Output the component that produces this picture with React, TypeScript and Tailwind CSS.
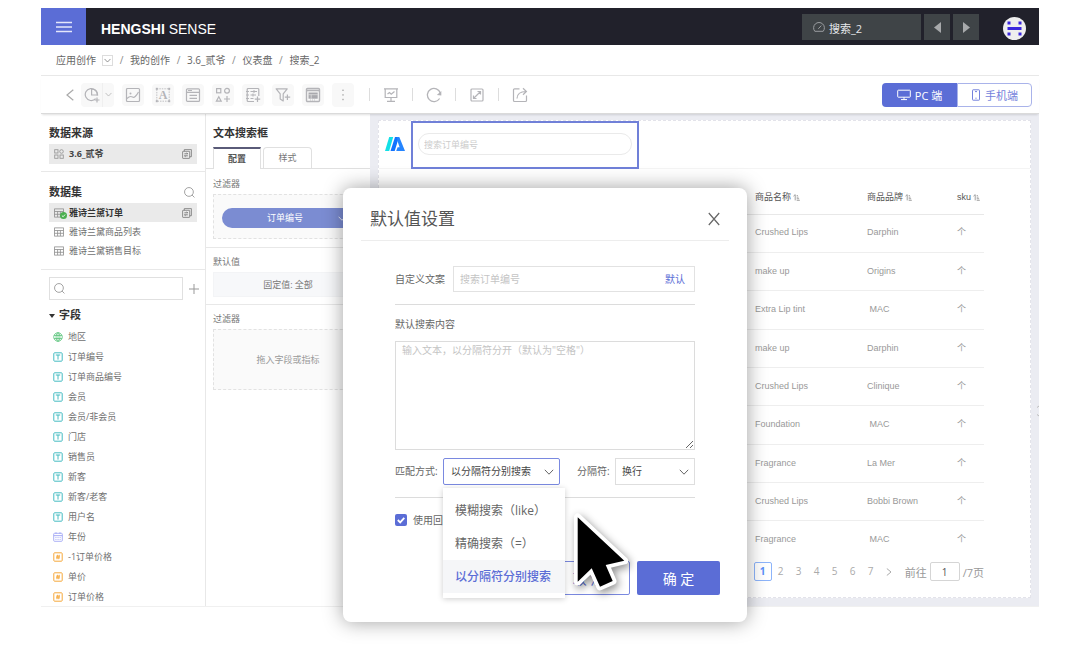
import { useState } from "react";
import type { ReactNode } from "react";

type FieldType = "geo" | "text" | "date" | "number";

const crumbs = ["我的创作", "3.6_贰爷", "仪表盘", "搜索_2"];

const datasets = ["雅诗兰黛订单", "雅诗兰黛商品列表", "雅诗兰黛销售目标"];

const fields: { name: string; type: FieldType }[] = [
  { name: "地区", type: "geo" },
  { name: "订单编号", type: "text" },
  { name: "订单商品编号", type: "text" },
  { name: "会员", type: "text" },
  { name: "会员/非会员", type: "text" },
  { name: "门店", type: "text" },
  { name: "销售员", type: "text" },
  { name: "新客", type: "text" },
  { name: "新客/老客", type: "text" },
  { name: "用户名", type: "text" },
  { name: "年份", type: "date" },
  { name: "-1订单价格", type: "number" },
  { name: "单价", type: "number" },
  { name: "订单价格", type: "number" },
];

const rows = [
  ["Crushed Lips", "Darphin"],
  ["make up", "Origins"],
  ["Extra Lip tint", " MAC"],
  ["make up", "Darphin"],
  ["Crushed Lips", "Clinique"],
  ["Foundation", " MAC"],
  ["Fragrance", "La Mer"],
  ["Crushed Lips", "Bobbi Brown"],
  ["Fragrance", " MAC"],
];

const matchModes = ["模糊搜索（like）", "精确搜索（=）", "以分隔符分别搜索"];

function Chevron({ className }: { className?: string }) {
  return (
    <svg viewBox="0 0 10 6" fill="none" stroke="currentColor" className={className}>
      <path d="M0.8 0.8 5 5.2 9.2 0.8" />
    </svg>
  );
}

function SearchIcon({ className }: { className?: string }) {
  return (
    <svg viewBox="0 0 12 12" fill="none" stroke="currentColor" className={className}>
      <circle cx="5.4" cy="5.4" r="4.8" />
      <path d="M8.8 8.8 11.4 11.4" />
    </svg>
  );
}

function Glyph({ children }: { children: ReactNode }) {
  return (
    <svg viewBox="0 0 16 16" fill="none" stroke="#b4b4b8" strokeWidth="1.2" className="h-4 w-4">
      {children}
    </svg>
  );
}

const widgetTools: { label: string; icon: ReactNode }[] = [
  {
    label: "图片",
    icon: (
      <>
        <rect x="1.5" y="1.5" width="13" height="13" rx="1" />
        <circle cx="5.5" cy="6.5" r="1" fill="#b4b4b8" stroke="none" />
        <path d="M2 11.5 Q5 8.5 7.5 10 T13.5 5" />
      </>
    ),
  },
  {
    label: "文本",
    icon: (
      <>
        <rect x="1.8" y="1.8" width="12.4" height="12.4" strokeDasharray="1.5 1" strokeWidth="0.8" />
        <g fill="#b4b4b8" stroke="none">
          <rect x="0.8" y="0.8" width="2" height="2" />
          <rect x="13.2" y="0.8" width="2" height="2" />
          <rect x="0.8" y="13.2" width="2" height="2" />
          <rect x="13.2" y="13.2" width="2" height="2" />
          <text x="8" y="12" fontSize="12" fontWeight="700" textAnchor="middle" fontFamily="Liberation Serif, serif">A</text>
        </g>
      </>
    ),
  },
  {
    label: "容器",
    icon: (
      <>
        <rect x="1.5" y="1.8" width="13" height="12.6" rx="1" />
        <path d="M1.5 5.3H14.5M4.5 8.3H12M4.5 11.3H12" />
        <path d="M3 3.5H7" strokeWidth="1" />
      </>
    ),
  },
  {
    label: "组件",
    icon: (
      <>
        <rect x="1.6" y="1.6" width="4.2" height="4.2" />
        <circle cx="12" cy="3.8" r="2.4" />
        <path d="M3.8 9.8 6.2 14.2H1.4ZM12 9V15M9 12H15" />
      </>
    ),
  },
  {
    label: "表单",
    icon: (
      <>
        <path d="M13.8 9V2.5a1 1 0 0 0-1-1H3.2a1 1 0 0 0-1 1v11a1 1 0 0 0 1 1H9" />
        <path d="M1 4.5H4M1 8H4M1 11.5H4M5.5 4.5H12M5.5 8H11M5.5 11.5H8.5M9 3V6M8 6.5V9.5" strokeWidth="1" />
        <path d="M12.5 9.5V15M9.8 12.2H15.2" />
      </>
    ),
  },
  {
    label: "过滤器",
    icon: (
      <>
        <path d="M1.2 1.8H12.2L8.2 6.8V14L5.2 12V6.8Z" strokeLinejoin="round" />
        <path d="M12.4 7.5V13M9.8 10.2H15.2" />
      </>
    ),
  },
  {
    label: "查询",
    icon: (
      <>
        <rect x="1.5" y="1.5" width="13" height="13" rx="1" strokeWidth="1.4" />
        <path d="M2 3.5H14" strokeWidth="1.6" />
        <rect x="3.5" y="5.5" width="9.2" height="6.2" fill="#a9a9ae" stroke="none" />
        <path d="M3.5 7.7H12.7M6.2 7.7V11.7" stroke="#fafafa" strokeWidth="0.5" />
        <path d="M5 13H11" strokeWidth="0.7" strokeDasharray="1 1" />
      </>
    ),
  },
];

const pageTools: { label: string; icon: ReactNode }[] = [
  {
    label: "演示",
    icon: (
      <>
        <path d="M1 1.8H15M2.2 1.8V10.5H13.8V1.8M8 10.5V14M4 14.3H12" />
        <path d="M4.5 7 6.5 5.5 8.2 7.2 11.5 4.5" />
      </>
    ),
  },
  {
    label: "刷新",
    icon: (
      <>
        <path d="M13.6 11.5A6.6 6.6 0 1 1 14.3 6" strokeWidth="1.3" />
        <path d="M15.3 4V8.5L10.8 8Z" fill="#b4b4b8" stroke="none" />
      </>
    ),
  },
  {
    label: "全屏",
    icon: (
      <>
        <rect x="2" y="2" width="12" height="12" rx="1" />
        <path d="M4.5 11.5 11.5 4.5M8.5 4.5H11.5V7.5M4.5 8.5V11.5H7.5" />
      </>
    ),
  },
  {
    label: "分享",
    icon: (
      <>
        <path d="M7.5 1.8H2.5a1 1 0 0 0-1 1v10.7a1 1 0 0 0 1 1h11a1 1 0 0 0 1-1V8.5" />
        <path d="M5 11.5C5.2 7 7.5 4.5 14 4.5M11 1.3 14.4 4.5 11 7.7" />
      </>
    ),
  },
];

function FieldIcon({ type }: { type: FieldType }) {
  if (type === "geo") {
    return (
      <svg viewBox="0 0 10 10" fill="none" stroke="#5cc47c" strokeWidth="0.8" className="h-[10px] w-[10px]">
        <circle cx="5" cy="5" r="4.3" />
        <ellipse cx="5" cy="5" rx="2" ry="4.3" />
        <path d="M1 3.5H9M1 6.5H9M5 0.7V9.3" />
      </svg>
    );
  }
  if (type === "date") {
    return (
      <svg viewBox="0 0 10 10" fill="none" stroke="#a3a8f5" strokeWidth="0.9" className="h-[10px] w-[10px]">
        <rect x="0.7" y="1.3" width="8.6" height="8" rx="0.8" />
        <path d="M0.7 3.6H9.3M3 0.2V2M7 0.2V2" />
        <path d="M2.4 5.4H7.8M2.4 7.4H7.8" strokeDasharray="1.1 1" />
      </svg>
    );
  }
  const color = type === "text" ? "#45bcc2" : "#f5a83c";
  return (
    <svg viewBox="0 0 10 10" fill="none" stroke={color} className="h-[10px] w-[10px]">
      <rect x="0.8" y="0.8" width="8.4" height="8.4" rx="0.8" />
      {type === "text" ? (
        <path d="M2.8 3H7.2M5 3V7.6" />
      ) : (
        <path d="M4.5 2.8 4 7.2M6.2 2.8 5.7 7.2M3.2 4.2H7M3 5.8H6.8" strokeWidth="0.9" />
      )}
    </svg>
  );
}

function TableIcon() {
  return (
    <svg viewBox="0 0 10 10" fill="none" stroke="#8c8c8c" strokeWidth="0.8" className="h-[10px] w-[10px]">
      <rect x="0.6" y="0.9" width="8.8" height="8.2" />
      <path d="M0.6 3.5H9.4M0.6 6.3H9.4M3.6 3.5V9M6.4 3.5V9" />
    </svg>
  );
}

function SwitchIcon() {
  return (
    <svg viewBox="0 0 10 10" fill="none" stroke="#777" strokeWidth="0.8" className="h-[10px] w-[10px]">
      <path d="M2.3 2.3V0.6H9.4V7.7H7.7" />
      <rect x="0.6" y="2.3" width="7.1" height="7.1" rx="0.5" />
      <path d="M2.4 4.8H5.8L4.6 3.9M5.8 6.8H2.4L3.6 7.7" strokeWidth="0.9" />
    </svg>
  );
}

function SortIcon() {
  return (
    <svg viewBox="0 0 8 8" fill="none" stroke="#888" strokeWidth="0.9" className="h-[7px] w-[7px]">
      <path d="M0.5 2.5 2.5 0.7V7.3M4.2 1.8H5.6M4.2 3.6H6.3M4.2 5.4H7M4.2 7.2H7.8" />
    </svg>
  );
}

function Header() {
  return (
    <header className="flex h-[37px] items-center bg-[#21212b]">
      <button aria-label="菜单" className="flex h-full w-[45px] items-center justify-center bg-[#5b6dd6]">
        <svg viewBox="0 0 16 12" stroke="#e4e7fb" className="h-3 w-4">
          <path d="M0 1.5H16M0 6H16M0 10.5H16" strokeWidth="1.3" />
        </svg>
      </button>
      <h1 className="ml-[15px] flex-1 pt-1 font-['Liberation_Sans',Arial,sans-serif] text-[14px] leading-4 text-white">
        <b>HENGSHI</b> SENSE
      </h1>
      <div className="flex items-center gap-[3px] pt-px">
        <button className="flex h-[26px] w-[119px] items-center gap-1 bg-[#3f4447] pl-[11px] text-[11px] leading-4 text-gray-200">
          <svg viewBox="0 0 12 12" fill="none" stroke="#9a9da0" className="h-3 w-3">
            <path d="M1.8 10.3A5.4 5.4 0 1 1 10.2 10.3ZM5.3 7.8 8.3 4.6" />
          </svg>
          <span className="pt-[3px]">搜索_2</span>
        </button>
        <button aria-label="上一页" className="flex h-[26px] w-[26px] items-center justify-center bg-[#3f4447]">
          <svg viewBox="0 0 7 11" className="h-[11px] w-[7px]"><path d="M7 0V11L0 5.5Z" fill="#a7a9ab" /></svg>
        </button>
        <button aria-label="下一页" className="flex h-[26px] w-[26px] items-center justify-center bg-[#3f4447]">
          <svg viewBox="0 0 7 11" className="h-[11px] w-[7px]"><path d="M0 0V11L7 5.5Z" fill="#a7a9ab" /></svg>
        </button>
      </div>
      <svg viewBox="0 0 23 23" className="mt-1 mr-[13px] ml-6 h-[23px] w-[23px]">
        <circle cx="11.5" cy="11.5" r="11.5" fill="#eeeeee" />
        <g fill="#3a26dc">
          <rect x="4.5" y="4.5" width="3" height="3" />
          <rect x="15.5" y="4.5" width="3" height="3" />
          <rect x="4.5" y="10" width="14" height="3" />
          <rect x="4.5" y="15.5" width="3" height="3" />
          <rect x="15.5" y="15.5" width="3" height="3" />
        </g>
      </svg>
    </header>
  );
}

function Breadcrumb() {
  return (
    <nav className="flex h-[31px] items-center border-b border-[#e8e8e8] pt-px pl-[15px] text-[10px] text-[#666]">
      <a href="#">应用创作</a>
      <button aria-label="展开" className="ml-[6px] flex h-[11px] w-[11px] items-center justify-center border border-[#ddd]">
        <Chevron className="h-[5px] w-[7px]" />
      </button>
      {crumbs.map((c) => (
        <span key={c} className="flex">
          <span className="w-[17px] text-center text-[#888]">/</span>
          <a href="#">{c}</a>
        </span>
      ))}
    </nav>
  );
}

function Toolbar() {
  return (
    <div className="relative z-10 flex h-[38px] items-center border-b border-[#dadada] pr-[7px] pl-[25px] shadow-[0_2px_2px_-1px_rgba(0,0,0,0.12)]">
      <button aria-label="返回">
        <svg viewBox="0 0 8 12" fill="none" stroke="#aaa" strokeWidth="1.2" className="h-3 w-2">
          <path d="M7.3 0.8 1 6 7.3 11.2" />
        </svg>
      </button>
      <div className="ml-[7px] flex items-center gap-2">
        <div className="flex h-6 w-[33px] items-center rounded bg-[#f8f8f8]">
          <button aria-label="图表" className="flex h-full w-[22px] items-center justify-center border-r border-[#efefef]">
            <Glyph>
              <path d="M11.6 11.7A6 6 0 1 1 13.2 8.5" />
              <path d="M7.6 2V8H13.6C13.6 4.5 11 2 7.6 2ZM13 10.5V15.5M10.5 13H15.5" />
            </Glyph>
          </button>
          <button aria-label="更多图表" className="flex h-full flex-1 items-center justify-center text-[#aaa]">
            <Chevron className="h-[5px] w-[7px]" />
          </button>
        </div>
        {widgetTools.map((t) => (
          <button key={t.label} aria-label={t.label} className="flex h-[22px] w-[22px] items-center justify-center rounded bg-[#f8f8f8]">
            <Glyph>{t.icon}</Glyph>
          </button>
        ))}
        <button aria-label="更多" className="flex h-6 w-[22px] items-center justify-center rounded bg-[#f8f8f8]">
          <svg viewBox="0 0 2 12" fill="#aaa" className="h-3 w-[2px]">
            <rect x="0.3" y="0.6" width="1.4" height="1.4" />
            <rect x="0.3" y="5.2" width="1.4" height="1.4" />
            <rect x="0.3" y="9.8" width="1.4" height="1.4" />
          </svg>
        </button>
      </div>
      <div className="ml-[15px] flex flex-1 items-center">
        {pageTools.map((t) => (
          <div key={t.label} className="flex w-[43px] items-center gap-[13px]">
            <span className="h-[13px] w-px bg-[#ddd]" />
            <button aria-label={t.label}><Glyph>{t.icon}</Glyph></button>
          </div>
        ))}
      </div>
      <div className="flex h-6 text-[11px] leading-4">
        <button className="flex w-[75px] items-center justify-center gap-1 rounded-l bg-[#5b6dd6] text-white">
          <svg viewBox="0 0 14 12" fill="none" stroke="#fff" className="h-3 w-[14px]">
            <rect x="0.7" y="1.2" width="12.6" height="7" rx="0.6" />
            <path d="M7 8.2V10.5M4 10.6H10" />
          </svg>
          <span className="pt-[2px]">PC 端</span>
        </button>
        <button className="flex w-[75px] items-center justify-center gap-1 rounded-r border border-[#a9b3ea] text-[#7482dc]">
          <svg viewBox="0 0 10 12" fill="none" stroke="currentColor" className="h-3 w-[10px]">
            <rect x="1.5" y="0.8" width="7" height="10.4" rx="0.6" />
            <path d="M4 2.6H6M4.4 9.2H5.6" />
          </svg>
          <span className="pt-[2px]">手机端</span>
        </button>
      </div>
    </div>
  );
}

function DataPanel() {
  return (
    <aside className="w-[165px] shrink-0 border-r border-[#e8e8e8] text-[9px] text-[#707070]">
      <section className="border-b border-[#e8e8e8] px-2 pt-[9px] pb-[7px]">
        <h2 className="flex h-[21px] items-center text-[11px] font-bold text-[#333]">数据来源</h2>
        <div className="flex h-5 items-center bg-[#eaeaea] px-[5px]">
          <svg viewBox="0 0 10 10" fill="none" stroke="#999" strokeWidth="0.9" className="h-[10px] w-[10px]">
            <rect x="0.7" y="0.7" width="3.3" height="3.3" />
            <circle cx="7.5" cy="2.5" r="1.8" />
            <rect x="0.7" y="6" width="3.3" height="3.3" />
            <rect x="6" y="6" width="3.3" height="3.3" />
          </svg>
          <span className="ml-[5px] flex-1 text-[9px] font-bold text-[#444]">3.6_贰爷</span>
          <SwitchIcon />
        </div>
      </section>
      <section className="border-b border-[#e8e8e8] px-2 pt-[9px] pb-[9px]">
        <div className="flex h-[22px] items-center justify-between pr-[2px]">
          <h2 className="text-[11px] font-bold text-[#333]">数据集</h2>
          <SearchIcon className="h-[11px] w-[11px] text-[#999]" />
        </div>
        <ul>
          {datasets.map((d, i) => (
            <li key={d} className={i === 0 ? "flex h-[19px] items-center bg-[#eaeaea] px-[5px] font-bold text-[#333]" : "flex h-[19px] items-center px-[5px]"}>
              <span className="relative">
                <TableIcon />
                {i === 0 && (
                  <svg viewBox="0 0 8 8" fill="none" stroke="#fff" className="absolute top-[4px] left-[6px] h-[7px] w-[7px]">
                    <circle cx="4" cy="4" r="4" fill="#4caf50" stroke="none" />
                    <path d="M2.2 4.2 3.6 5.4 5.8 2.9" />
                  </svg>
                )}
              </span>
              <span className="ml-[5px] flex-1">{d}</span>
              {i === 0 && <SwitchIcon />}
            </li>
          ))}
        </ul>
      </section>
      <section className="pt-[7px] pl-2">
        <div className="flex items-center gap-[6px]">
          <label className="flex h-[23px] w-[134px] items-center border border-[#e0e0e0] pl-1">
            <SearchIcon className="h-[11px] w-[11px] shrink-0 text-[#999]" />
            <input aria-label="搜索字段" className="ml-1 w-full min-w-0 outline-none" />
          </label>
          <button aria-label="新建字段">
            <svg viewBox="0 0 10 10" stroke="#999" className="h-[10px] w-[10px]"><path d="M5 0V10M0 5H10" /></svg>
          </button>
        </div>
        <h2 className="mt-1 flex h-[23px] items-center gap-1 text-[11px] font-bold text-[#333]">
          <svg viewBox="0 0 6 4" className="h-1 w-[6px]"><path d="M0 0H6L3 4Z" fill="#333" /></svg>
          字段
        </h2>
        <ul className="pl-1">
          {fields.map((f) => (
            <li key={f.name} className="flex h-5 items-center gap-[5px] last:h-[19px]">
              <FieldIcon type={f.type} />
              {f.name}
            </li>
          ))}
        </ul>
      </section>
    </aside>
  );
}

function ConfigPanel() {
  return (
    <aside className="w-[164px] shrink-0 text-[9px] text-[#777]">
      <h2 className="mt-[9px] flex h-[21px] items-center pl-[7px] text-[11px] font-bold text-[#333]">文本搜索框</h2>
      <div className="mt-[3px] flex h-[22px] gap-[2px] border-b border-[#e0e0e0] pl-[7px]">
        <button className="-mb-px w-[48px] border-x border-t-2 border-x-[#e0e0e0] border-t-[#5a5b78] bg-white font-bold text-[#555]">配置</button>
        <button className="w-[49px] rounded-t border border-b-0 border-[#e0e0e0]">样式</button>
      </div>
      <section className="border-b border-[#e8e8e8] px-[7px] pt-[5px] pb-2">
        <h3 className="h-5 leading-5">过滤器</h3>
        <div className="border border-dashed border-[#e2e2e2] bg-[#fafafa] px-2 pt-[13px] pb-[10px]">
          <button className="flex h-5 w-full items-center rounded-full bg-[#7b8cd2] pr-2 pl-[10px] text-white">
            <span className="flex-1">订单编号</span>
            <Chevron className="h-[5px] w-[8px]" />
          </button>
        </div>
      </section>
      <section className="border-b border-[#e8e8e8] px-[7px] pt-1 pb-[7px]">
        <h3 className="h-5 leading-5">默认值</h3>
        <button className="h-[25px] w-full border border-[#f3f4f6] bg-[#f7f8fa]">固定值: 全部</button>
      </section>
      <section className="px-[7px] pt-1">
        <h3 className="h-5 leading-5">过滤器</h3>
        <div className="flex h-[61px] items-center justify-center border border-dashed border-[#e2e2e2] bg-[#fafafa] text-[#999]">拖入字段或指标</div>
      </section>
    </aside>
  );
}

function Pagination() {
  return (
    <div className="mt-1 flex h-[19px] items-center justify-end text-[10px] text-[#aaa]">
      <button aria-label="上一页" className="mr-2 text-[#ccc]">&lt;</button>
      <button className="h-[19px] w-[18px] rounded-xs border border-[#8db4fa] font-bold text-[#5b8ff9]">1</button>
      {[2, 3, 4, 5, 6, 7].map((n) => (
        <button key={n} className="w-[18px]">{n}</button>
      ))}
      <button aria-label="下一页" className="flex w-[18px] justify-center">
        <svg viewBox="0 0 6 8" fill="none" stroke="currentColor" className="h-2 w-[6px]"><path d="M0.8 0.5 5 4 0.8 7.5" /></svg>
      </button>
      <label htmlFor="page" className="ml-[7px] pt-[2px] text-[11px] leading-4 text-[#999]">前往</label>
      <input id="page" defaultValue="1" className="mx-[3px] h-[19px] w-[30px] rounded-xs border border-[#d5d5d5] text-center text-[#555] outline-none" />
      <span className="pt-[2px] text-[11px] leading-4 text-[#999]">/7页</span>
    </div>
  );
}

function Canvas() {
  return (
    <main className="relative min-w-0 flex-1 bg-[#ebecf2] p-2 pt-[6px]">
      <div className="h-full border border-dashed border-[#e3e3ea] bg-white">
        <div className="flex h-[48px] border-b border-[#f4f4f4] pl-[6px]">
          <svg viewBox="0 0 20 14" className="mt-4 h-[14px] w-5">
            <path d="M4.2 0H8.2L4.2 14H0Z" fill="#12e0e6" />
            <path d="M10 0H14L9.7 14H5.5Z" fill="#1273ff" />
            <path d="M12 0H14.3L20 14H11.2L12.6 10.2H14.6L12.6 4.6Z" fill="#2585ff" />
          </svg>
          <div className="ml-[6px] h-[48px] w-[228px] border-2 border-[#7080d8] px-[5px] pt-[10px]">
            <input
              aria-label="搜索订单编号"
              placeholder="搜索订单编号"
              className="block h-[22px] w-full rounded-full border border-[#eaeaea] px-[5px] text-[9px] outline-none placeholder:text-[#ccc]"
            />
          </div>
        </div>
        <div className="pt-[13px] pr-[46px] pl-4">
          <table className="h-[376px] w-full text-left font-['Liberation_Sans','Noto_Sans_CJK_SC',sans-serif] text-[9px] text-[#999]">
            <thead>
              <tr className="h-8 border-b border-[#e8e8e8] text-[#555]">
                <td />
                {["商品名称", "商品品牌", "sku"].map((h, i) => (
                  <th key={h} className={i === 0 ? "w-[112px] font-normal" : i === 1 ? "w-[90px] font-normal" : "w-[27px] font-normal"}>
                    <span className="flex items-center gap-[2px]">{h}<SortIcon /></span>
                  </th>
                ))}
              </tr>
            </thead>
            <tbody>
              {rows.map(([name, brand], i) => (
                <tr key={i} className="border-b border-[#eeeeee] last:border-b-0">
                  <td />
                  <td>{name}</td>
                  <td className="whitespace-pre">{brand}</td>
                  <td>个</td>
                </tr>
              ))}
            </tbody>
          </table>
          <Pagination />
        </div>
      </div>
      <svg viewBox="0 0 3 12" stroke="#bbb" fill="none" className="absolute top-[291px] right-0 h-3 w-[3px]">
        <path d="M3 1 1 2.5M1 9.5 3 11" />
      </svg>
    </main>
  );
}

function DefaultValueDialog() {
  const [mode, setMode] = useState(matchModes[2]);

  return (
    <div role="dialog" aria-label="默认值设置" className="relative w-[404px] rounded-lg bg-white pb-[27px] text-[10px] text-[#666] shadow-[0_0_20px_rgba(0,0,0,0.38)]">
      <div className="mx-[18px] flex h-[53px] items-center justify-between border-b border-[#ededed] px-[9px] pt-[10px]">
        <h2 className="text-[17px] text-[#555]">默认值设置</h2>
        <button aria-label="关闭">
          <svg viewBox="0 0 12 14" fill="none" stroke="#666" strokeWidth="1.2" className="h-[14px] w-3">
            <path d="M0.8 1 11.2 13M11.2 1 0.8 13" />
          </svg>
        </button>
      </div>

      <div className="mx-[52px]">
        <div className="mt-[25px] flex items-center gap-2">
          <label htmlFor="custom-text">自定义文案</label>
          <div className="flex h-[26px] flex-1 items-center border border-[#e2e2e2] pr-[9px] pl-[6px]">
            <input id="custom-text" placeholder="搜索订单编号" className="min-w-0 flex-1 outline-none placeholder:text-[#c4c4c4]" />
            <button className="text-[#5b6dd6]">默认</button>
          </div>
        </div>

        <div className="mt-3 border-t border-[#dcdcdc] pt-[9px]">
          <label htmlFor="default-search" className="block h-5 leading-5">默认搜索内容</label>
          <textarea
            id="default-search"
            placeholder={'输入文本，以分隔符分开（默认为"空格"）'}
            className="mt-[7px] block h-[109px] w-full resize border border-[#dcdcdc] px-[6px] py-px outline-none placeholder:text-[#c4c4c4]"
          />
        </div>

        <div className="mt-[8px] flex items-center">
          <label htmlFor="mode" className="w-12">匹配方式:</label>
          <div className="relative w-[117px]">
            <select
              id="mode"
              value={mode}
              onChange={(e) => setMode(e.target.value)}
              className="h-[27px] w-full appearance-none rounded-xs border border-[#7a89e0] bg-white pl-[7px] text-[#444] outline-none"
            >
              {matchModes.map((m) => <option key={m}>{m}</option>)}
            </select>
            <Chevron className="pointer-events-none absolute top-[11px] right-[6px] h-[6px] w-[10px]" />
            <ul className="absolute top-full left-0 z-10 mt-[3px] w-[122px] bg-white pt-[6px] pb-[5px] text-[12px] shadow-[0_1px_6px_rgba(0,0,0,0.2)]">
              {matchModes.map((m) => (
                <li key={m}>
                  <button
                    onClick={() => setMode(m)}
                    className={m === mode ? "block h-[33px] w-full bg-[#f5f6f8] pl-3 text-left font-medium whitespace-nowrap text-[#5b6dd6]" : "block h-[33px] w-full pl-3 text-left whitespace-nowrap"}
                  >
                    {m}
                  </button>
                </li>
              ))}
            </ul>
          </div>
          <label htmlFor="separator" className="ml-[17px] w-[38px]">分隔符:</label>
          <div className="relative flex-1">
            <select id="separator" className="h-[27px] w-full appearance-none border border-[#dedede] bg-white pl-[6px] text-[#444] outline-none">
              <option>换行</option>
            </select>
            <Chevron className="pointer-events-none absolute top-[11px] right-[6px] h-[6px] w-[10px]" />
          </div>
        </div>

        <div className="mt-3 border-t border-[#dcdcdc] pt-3">
          <label className="flex h-5 items-center gap-[6px]">
            <span className="relative flex">
              <input type="checkbox" defaultChecked className="peer h-3 w-3 appearance-none rounded-xs bg-[#d5d8ea] checked:bg-[#5b6dd6]" />
              <svg viewBox="0 0 12 12" fill="none" stroke="#fff" strokeWidth="1.8" className="pointer-events-none absolute inset-0 hidden h-3 w-3 peer-checked:block">
                <path d="M2.8 6 5.2 8.4 9.3 3.8" />
              </svg>
            </span>
            使用回车
          </label>
        </div>
      </div>

      <div className="mx-[27px] mt-[31px] flex justify-end gap-[7px] text-[14px]">
        <button className="h-[34px] w-[83px] rounded-xs border border-[#7a89e0] text-[#5b6dd6]">取 消</button>
        <button className="h-[34px] w-[83px] rounded-xs bg-[#5b6dd6] text-white">确 定</button>
      </div>

      {/* mouse pointer */}
      <svg viewBox="0 0 68 90" className="pointer-events-none absolute top-[320px] left-[227px] z-20 h-[90px] w-[68px] drop-shadow-[2px_3px_4px_rgba(0,0,0,0.45)]">
        <path
          d="M7.7 9.3V73.7L21.7 60.3 30 78.7 42.7 73 35.7 57 54.3 52.7Z"
          fill="#000"
          stroke="#fff"
          strokeWidth="7.5"
          strokeLinejoin="round"
          paintOrder="stroke"
        />
      </svg>
    </div>
  );
}

export default function App() {
  return (
    <div className="min-h-screen bg-white px-[41px] pt-2 font-['Open_Sans','Noto_Sans_CJK_SC',sans-serif]">
      <div className="relative">
        <Header />
        <Breadcrumb />
        <Toolbar />
        <div className="flex border-b border-[#f0f0f0]">
          <DataPanel />
          <ConfigPanel />
          <Canvas />
        </div>
        <div className="absolute inset-x-0 top-[180px] z-20 flex justify-center pl-[10px]">
          <DefaultValueDialog />
        </div>
      </div>
    </div>
  );
}
